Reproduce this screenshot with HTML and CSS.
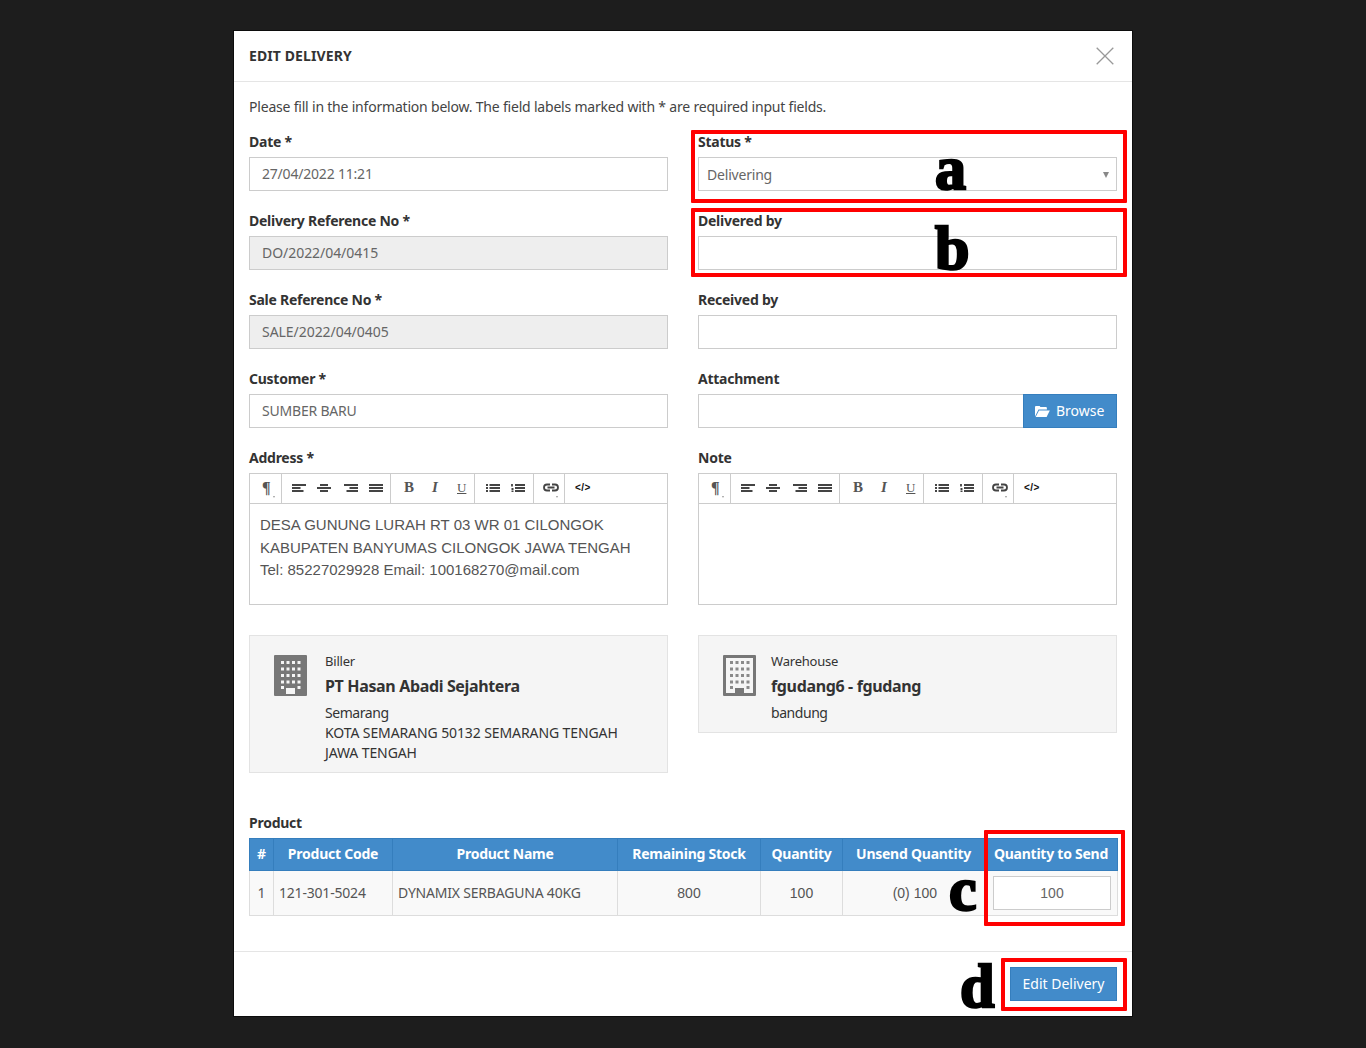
FILE: index.html
```html
<!DOCTYPE html>
<html lang="en">
<head>
<meta charset="utf-8">
<title>Edit Delivery</title>
<link rel="stylesheet" href="styles.css">
</head>
<body>
<svg class="defs" width="0" height="0" aria-hidden="true">
  <symbol id="i-left" viewBox="0 0 14 8"><path d="M0 1h14M0 4h8.500M0 7h11.500" /></symbol>
  <symbol id="i-center" viewBox="0 0 14 8"><path d="M3 1h8M0 4h14M3 7h8" /></symbol>
  <symbol id="i-right" viewBox="0 0 14 8"><path d="M0 1h14M5.500 4h8.500M2.500 7h11.500" /></symbol>
  <symbol id="i-just" viewBox="0 0 14 8"><path d="M0 1h14M0 4h14M0 7h14" /></symbol>
  <symbol id="i-ul" viewBox="0 0 14 8"><path d="M3.500 1h10.500M3.500 4h10.500M3.500 7h10.500M0 1h2M0 4h2M0 7h2" /></symbol>
  <symbol id="i-ol" viewBox="0 0 14 8"><path d="M4 1h10M4 4h10M4 7h10M1 0v2.500M.5 5h2M.5 7.500h2" /></symbol>
  <symbol id="i-link" viewBox="0 0 16 9"><path d="M7 1.500H4a2.800 2.800 0 0 0 0 6h3M9 1.500h3a2.800 2.800 0 0 1 0 6H9M4.500 4.500h7" /></symbol>
  <symbol id="i-folder" viewBox="0 0 16 13"><path d="M1 11.500V2.200C1 1.500 1.500 1 2.200 1h2.900c.7 0 1 .4 1.200 1h5.400c.7 0 1.200.5 1.200 1.200V4.500H4.500L1 11.500z"/><path d="M5 5.500h10.800L12.600 12H1.700z"/></symbol>
</svg>

<main class="modal">
  <header class="modal-head">
    <h1 class="modal-title">EDIT DELIVERY</h1>
    <svg class="close" viewBox="0 0 18 18"><path d="M.7.7l16.600 16.600M17.300.7L.7 17.300"/></svg>
  </header>

  <section class="modal-body">
    <p class="intro">Please fill in the information below. The field labels marked with * are required input fields.</p>

    <div class="form-grid">
      <div class="col">
        <div class="field"><label class="label">Date *</label><input class="input" type="text" value="27/04/2022 11:21"></div>
        <div class="field"><label class="label">Delivery Reference No *</label><input class="input" type="text" value="DO/2022/04/0415" disabled></div>
        <div class="field"><label class="label">Sale Reference No *</label><input class="input" type="text" value="SALE/2022/04/0405" disabled></div>
        <div class="field"><label class="label">Customer *</label><input class="input" type="text" value="SUMBER BARU"></div>
        <div class="field">
          <label class="label">Address *</label>
          <div class="editor">
            <div class="toolbar">
              <div class="tb-group tb-para"><span class="pilcrow">¶</span><i class="caret"></i></div>
              <div class="tb-group tb-align">
                <svg class="tb-i"><use href="#i-left"/></svg><svg class="tb-i"><use href="#i-center"/></svg><svg class="tb-i tb-right"><use href="#i-right"/></svg><svg class="tb-i"><use href="#i-just"/></svg>
              </div>
              <div class="tb-group tb-font"><b class="g-b">B</b><i class="g-i">I</i><u class="g-u">U</u></div>
              <div class="tb-group tb-list"><svg class="tb-i"><use href="#i-ul"/></svg><svg class="tb-i"><use href="#i-ol"/></svg></div>
              <div class="tb-group tb-link"><svg class="tb-l"><use href="#i-link"/></svg><i class="caret"></i></div>
              <div class="tb-code">&lt;/&gt;</div>
            </div>
            <div class="editor-body">DESA GUNUNG LURAH RT 03 WR 01 CILONGOK<br>KABUPATEN BANYUMAS CILONGOK JAWA TENGAH<br>Tel: 85227029928 Email: 100168270@mail.com</div>
          </div>
        </div>
      </div>

      <div class="col">
        <div class="field">
          <label class="label">Status *</label>
          <div class="select"><span>Delivering</span><i class="select-arrow"></i></div>
        </div>
        <div class="field"><label class="label">Delivered by</label><input class="input" type="text"></div>
        <div class="field"><label class="label">Received by</label><input class="input" type="text"></div>
        <div class="field">
          <label class="label">Attachment</label>
          <div class="file-row">
            <input class="input file-input" type="text">
            <div class="btn browse"><svg class="folder"><use href="#i-folder"/></svg>Browse</div>
          </div>
        </div>
        <div class="field">
          <label class="label">Note</label>
          <div class="editor">
            <div class="toolbar">
              <div class="tb-group tb-para"><span class="pilcrow">¶</span><i class="caret"></i></div>
              <div class="tb-group tb-align">
                <svg class="tb-i"><use href="#i-left"/></svg><svg class="tb-i"><use href="#i-center"/></svg><svg class="tb-i tb-right"><use href="#i-right"/></svg><svg class="tb-i"><use href="#i-just"/></svg>
              </div>
              <div class="tb-group tb-font"><b class="g-b">B</b><i class="g-i">I</i><u class="g-u">U</u></div>
              <div class="tb-group tb-list"><svg class="tb-i"><use href="#i-ul"/></svg><svg class="tb-i"><use href="#i-ol"/></svg></div>
              <div class="tb-group tb-link"><svg class="tb-l"><use href="#i-link"/></svg><i class="caret"></i></div>
              <div class="tb-code">&lt;/&gt;</div>
            </div>
            <div class="editor-body"></div>
          </div>
        </div>
      </div>
    </div>

    <div class="wells">
      <div class="well well-biller">
        <svg class="bld" viewBox="0 0 33 41">
          <rect width="33" height="41" rx="1" fill="#777"/>
          <path d="M7 6h3v3H7zM12.500 6h3v3h-3zM18 6h3v3h-3zM23.500 6h3v3h-3zM7 12.500h3v3H7zM12.500 12.500h3v3h-3zM18 12.500h3v3h-3zM23.500 12.500h3v3h-3zM7 19h3v3H7zM12.500 19h3v3h-3zM18 19h3v3h-3zM23.500 19h3v3h-3zM7 25.500h3v3H7zM12.500 25.500h3v3h-3zM18 25.500h3v3h-3zM23.500 25.500h3v3h-3zM7 31h3v3H7zM23.500 31h3v3h-3zM12 33h9v6h-9z" fill="#f5f5f5"/>
        </svg>
        <div class="well-text">
          <div class="well-kicker">Biller</div>
          <h2 class="well-name">PT Hasan Abadi Sejahtera</h2>
          <div class="well-city">Semarang</div>
          <div class="well-addr">KOTA SEMARANG 50132 SEMARANG TENGAH<br>JAWA TENGAH</div>
        </div>
      </div>
      <div class="well well-wh">
        <svg class="bld" viewBox="0 0 33 41">
          <path fill="#777" d="M1 0h31a1 1 0 0 1 1 1v39a1 1 0 0 1-1 1H1a1 1 0 0 1-1-1V1a1 1 0 0 1 1-1zM3 3v35h9v-5h9v5h9V3z"/>
          <path fill="#777" d="M12 33h9v8h-9z"/>
          <path fill="#8a8a8a" d="M7 6h3v3H7zM12.500 6h3v3h-3zM18 6h3v3h-3zM23.500 6h3v3h-3zM7 12.500h3v3H7zM12.500 12.500h3v3h-3zM18 12.500h3v3h-3zM23.500 12.500h3v3h-3zM7 19h3v3H7zM12.500 19h3v3h-3zM18 19h3v3h-3zM23.500 19h3v3h-3zM7 25.500h3v3H7zM12.500 25.500h3v3h-3zM18 25.500h3v3h-3zM23.500 25.500h3v3h-3zM7 31h3v3H7zM23.500 31h3v3h-3z"/>
        </svg>
        <div class="well-text">
          <div class="well-kicker">Warehouse</div>
          <h2 class="well-name">fgudang6 - fgudang</h2>
          <div class="well-city">bandung</div>
        </div>
      </div>
    </div>

    <div class="product">
      <label class="label">Product</label>
      <table class="table">
        <colgroup>
          <col class="c1"><col class="c2"><col class="c3"><col class="c4"><col class="c5"><col class="c6"><col class="c7">
        </colgroup>
        <thead>
          <tr><th>#</th><th>Product Code</th><th>Product Name</th><th>Remaining Stock</th><th>Quantity</th><th>Unsend Quantity</th><th>Quantity to Send</th></tr>
        </thead>
        <tbody>
          <tr>
            <td class="mid">1</td><td>121-301-5024</td><td>DYNAMIX SERBAGUNA 40KG</td>
            <td class="mid num">800</td><td class="mid num">100</td><td class="rt num">(0) 100</td>
            <td class="qty-cell"><input class="input qty" type="text" value="100"></td>
          </tr>
        </tbody>
      </table>
    </div>
  </section>

  <footer class="modal-foot"><div class="btn submit">Edit Delivery</div></footer>

  <div class="mark mark-a"></div>
  <div class="mark mark-b"></div>
  <div class="mark mark-c"></div>
  <div class="mark mark-d"></div>
  <span class="letter letter-a">a</span>
  <span class="letter letter-b">b</span>
  <span class="letter letter-c">c</span>
  <span class="letter letter-d">d</span>
</main>
</body>
</html>
```
FILE: styles.css
```css
* { box-sizing: border-box; }
html, body { margin: 0; height: 100%; }
body {
  background: #1d1d1d;
  overflow: hidden;
  font: 14px/20px "Noto Sans", "Liberation Sans", sans-serif;
  letter-spacing: -0.2px;
  color: #333;
}
.defs { display: block; position: absolute; }

.modal {
  position: relative;
  width: 898px;
  height: 985px;
  margin: 31px auto 0;
  background: #fff;
  box-shadow: 0 0 0 1px #0c0c0c;
}
.modal-head {
  display: flex;
  align-items: center;
  justify-content: space-between;
  height: 51px;
  padding: 0 18px 1px 15px;
  border-bottom: 1px solid #e5e5e5;
}
.modal-title { margin: 0; font-size: 14px; line-height: 20px; font-weight: 700; letter-spacing: 0.1px; }
.close { width: 18px; height: 18px; fill: none; stroke: #999; stroke-width: 1.3; }

.modal-body { padding: 15px 15px 35px; height: 869px; }
.intro { margin: 0 0 15px; color: #444; }
.form-grid, .wells { display: grid; grid-template-columns: 419px 419px; column-gap: 30px; }
.field { margin-bottom: 20px; }
.col .field:last-child { margin-bottom: 0; }
.label { display: block; margin-bottom: 5px; font-weight: 700; letter-spacing: -0.25px; }
.input {
  display: block;
  width: 100%;
  height: 34px;
  padding: 5px 12px 7px;
  border: 1px solid #ccc;
  border-radius: 0;
  background: #fff;
  color: #666;
  font: inherit;
  letter-spacing: inherit;
  outline: none;
}
.input:disabled { background: #eee; color: #666; opacity: 1; letter-spacing: -0.05px; }

.select {
  display: flex;
  align-items: center;
  justify-content: space-between;
  height: 34px;
  padding: 1px 7px 0 8px;
  border: 1px solid #ccc;
  color: #666;
}
.select-arrow {
  width: 0; height: 0;
  border: 3.500px solid transparent;
  border-top: 6px solid #888;
  border-bottom: 0;
}

.file-row { display: flex; }
.file-input { flex: 1; border-right: 0; }
.btn {
  display: flex;
  align-items: center;
  justify-content: center;
  height: 34px;
  background: #428bca;
  border: 1px solid #357ebd;
  color: #fff;
  letter-spacing: 0;
}
.browse { width: 94px; gap: 6px; justify-content: flex-start; padding-left: 10px; }
.folder { width: 16px; height: 13px; fill: #fff; }

.editor { height: 132px; border: 1px solid #ccc; }
.toolbar { display: flex; height: 30px; border-bottom: 1px solid #ccc; }
.tb-group {
  position: relative;
  display: flex;
  align-items: center;
  height: 29px;
  padding-bottom: 2px;
  border-right: 1px solid #ccc;
  color: #555;
}
.tb-para { width: 32px; padding-left: 12px; }
.pilcrow { font: 700 16px/1 "Liberation Serif", serif; letter-spacing: 0; color: #555; }
.caret {
  position: absolute;
  right: 6px;
  bottom: 5px;
  border: 1.500px solid transparent;
  border-top: 2px solid #999;
  border-bottom: 0;
}
.tb-align { width: 109px; padding-left: 10px; gap: 11px; }
.tb-right { margin-left: 2px; }
.tb-i { width: 14px; height: 8px; fill: none; stroke: #444; stroke-width: 1.800; flex: none; }
.tb-font { width: 84px; padding-left: 13px; font: 13px/1 "Liberation Serif", serif; letter-spacing: 0; }
.g-b { width: 28px; font-size: 15px; }
.g-i { width: 25px; font-size: 15px; font-weight: 700; }
.g-u { width: 10px; }
.tb-list { width: 59px; padding-left: 11px; gap: 11px; }
.tb-link { width: 31px; padding-left: 9px; }
.tb-l { width: 16px; height: 9px; fill: none; stroke: #444; stroke-width: 1.800; }
.tb-code { padding: 4px 0 0 10px; font: 700 10px/20px "Liberation Sans", sans-serif; letter-spacing: 0.5px; color: #111; }
.editor-body {
  height: 101px;
  padding: 10px;
  font: 15px/22.600px "Liberation Sans", Arial, sans-serif;
  letter-spacing: 0;
  color: #555;
}

.wells { margin-top: 30px; align-items: start; }
.well {
  display: flex;
  padding: 15px 15px 9px 24px;
  background: #f5f5f5;
  border: 1px solid #e3e3e3;
  color: #333;
}
.bld { flex: none; width: 33px; height: 41px; margin-top: 4px; }
.well-biller .bld { margin-right: 18px; }
.well-wh .bld { margin-right: 15px; }
.well-kicker { font-size: 13px; }
.well-name { margin: 5px 0 7px; font-size: 16px; line-height: 20px; font-weight: 700; letter-spacing: -0.35px; }
.well-city { letter-spacing: -0.45px; }
.well-addr { letter-spacing: -0.1px; }

.product { margin-top: 40px; }
.table { width: 868px; border-collapse: collapse; table-layout: fixed; }
.c1 { width: 24px; } .c2 { width: 119px; } .c3 { width: 225px; } .c4 { width: 143px; }
.c5 { width: 82px; } .c6 { width: 142px; } .c7 { width: 133px; }
.table th {
  height: 32px;
  padding: 0 0 2px;
  background: #428bca;
  border: 1px solid #357ebd;
  color: #fff;
  font-weight: 700;
  letter-spacing: -0.25px;
  text-align: center;
}
.table td {
  height: 45px;
  padding: 0 5px;
  background: #f9f9f9;
  border: 1px solid #ddd;
  color: #555;
}
.table .mid { text-align: center; }
.table .rt { padding-right: 47px; text-align: right; }
.num { font-family: "Liberation Sans", Arial, sans-serif; letter-spacing: 0; }
.table .qty-cell { padding: 0 6px 0 8px; }
.qty { height: 34px; padding: 0 8px; text-align: center; font-family: "Liberation Sans", Arial, sans-serif; letter-spacing: 0; }

.modal-foot {
  display: flex;
  justify-content: flex-end;
  height: 65px;
  padding: 15px;
  border-top: 1px solid #e5e5e5;
}
.submit { width: 107px; }

.mark { position: absolute; border: 4px solid #f00; border-radius: 1px; pointer-events: none; }
.mark-a { left: 457px; top: 99px; width: 436px; height: 73px; }
.mark-b { left: 457px; top: 177px; width: 436px; height: 69px; }
.mark-c { left: 750px; top: 799px; width: 141px; height: 96px; }
.mark-d { left: 767px; top: 927px; width: 126px; height: 53px; }
.letter {
  position: absolute;
  font: 700 62px/36px "Liberation Serif", serif;
  letter-spacing: 0;
  color: #000;
  -webkit-text-stroke: 2.500px #000;
}
.letter-a { left: 701px; top: 119px; }
.letter-b { left: 701px; top: 199px; }
.letter-c { left: 715px; top: 840px; }
.letter-d { left: 726px; top: 937px; }
```
